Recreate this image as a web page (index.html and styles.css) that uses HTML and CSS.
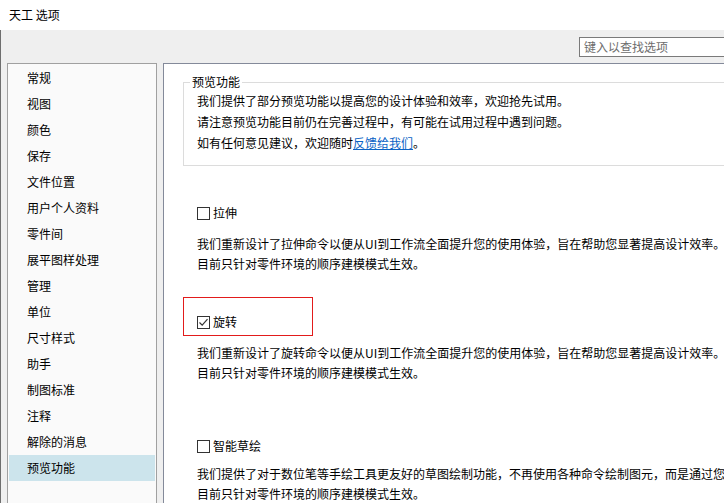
FILE: index.html
```html
<!DOCTYPE html>
<html lang="zh-CN">
<head>
<meta charset="utf-8">
<title>天工 选项</title>
<link rel="stylesheet" href="styles.css">
</head>
<body>
<div class="titlebar">天工 选项</div>
<div class="window">
  <div class="toolbar">
    <div class="search">键入以查找选项</div>
  </div>
  <div class="main">
    <ul class="sidebar">
      <li>常规</li>
      <li>视图</li>
      <li>颜色</li>
      <li>保存</li>
      <li>文件位置</li>
      <li>用户个人资料</li>
      <li>零件间</li>
      <li>展平图样处理</li>
      <li>管理</li>
      <li>单位</li>
      <li>尺寸样式</li>
      <li>助手</li>
      <li>制图标准</li>
      <li>注释</li>
      <li>解除的消息</li>
      <li class="selected">预览功能</li>
    </ul>
    <div class="content">
      <fieldset class="group">
        <legend>预览功能</legend>
        <p>我们提供了部分预览功能以提高您的设计体验和效率，欢迎抢先试用。</p>
        <p>请注意预览功能目前仍在完善过程中，有可能在试用过程中遇到问题。</p>
        <p>如有任何意见建议，欢迎随时<a href="#" class="link">反馈给我们</a>。</p>
      </fieldset>

      <div class="option option-1">
        <div class="option-head">
          <span class="checkbox"></span><span class="label">拉伸</span>
        </div>
        <div class="desc">
          <p>我们重新设计了拉伸命令以便从UI到工作流全面提升您的使用体验，旨在帮助您显著提高设计效率。</p>
          <p>目前只针对零件环境的顺序建模模式生效。</p>
        </div>
      </div>

      <div class="option option-2">
        <div class="option-head highlight">
          <span class="checkbox checked"><svg viewBox="0 0 13 13" width="13" height="13"><path d="M2.5 6.5 L5.2 9.2 L10.5 3.2" fill="none" stroke="#333" stroke-width="1.2"/></svg></span><span class="label">旋转</span>
        </div>
        <div class="desc">
          <p>我们重新设计了旋转命令以便从UI到工作流全面提升您的使用体验，旨在帮助您显著提高设计效率。</p>
          <p>目前只针对零件环境的顺序建模模式生效。</p>
        </div>
      </div>

      <div class="option option-3">
        <div class="option-head">
          <span class="checkbox"></span><span class="label">智能草绘</span>
        </div>
        <div class="desc">
          <p>我们提供了对于数位笔等手绘工具更友好的草图绘制功能，不再使用各种命令绘制图元，而是通过您的笔迹自动识别图元。</p>
          <p>目前只针对零件环境的顺序建模模式生效。</p>
        </div>
      </div>
    </div>
  </div>
</div>
</body>
</html>
```

FILE: styles.css
```css
* { box-sizing: border-box; }
html, body {
  margin: 0;
  padding: 0;
  width: 724px;
  height: 503px;
  overflow: hidden;
  background: #efefef;
  font-family: "Noto Sans CJK SC", "Noto Sans", sans-serif;
  font-size: 12px;
  color: #000;
}
.titlebar {
  height: 30px;
  line-height: 30px;
  padding-left: 9px;
  background: #fff;
  font-size: 12px;
}
.window {
  height: 473px;
  background: #efefef;
  border-left: 1px solid #6e6e6e;
  overflow: hidden;
}
.toolbar {
  height: 33px;
  padding: 7px 0 0 578px;
  display: flex;
}
.search {
  flex: none;
  width: 170px;
  height: 20px;
  border: 1px solid #7a7a7a;
  background: #fff;
  color: #6d6d6d;
  padding-left: 4px;
  line-height: 17px;
  white-space: nowrap;
}
.main {
  display: flex;
  gap: 6px;
  padding-left: 6px;
  height: 480px;
}
.sidebar {
  list-style: none;
  margin: 0;
  padding: 1px 1px 0 1px;
  width: 150px;
  flex: none;
  background: #fafafa;
  border: 1px solid #a0a0a0;
  border-bottom: none;
}
.sidebar li {
  height: 26px;
  line-height: 25px;
  padding-left: 18px;
}
.sidebar li.selected {
  background: #cce4ec;
}
.content {
  flex: 1;
  min-width: 0;
  background: #fff;
  border: 1px solid #848a9a;
  border-bottom: none;
  border-right: none;
  overflow: hidden;
  white-space: nowrap;
}
p { margin: 0; }
.group {
  margin: 10px 0 0 19px;
  width: 620px;
  padding: 0 0 12px 13px;
  border: 1px solid #dcdcdc;
  min-width: 0;
}
.group legend {
  margin-left: -7px;
  padding: 0 2px;
  line-height: 16px;
}
.group p {
  line-height: 21px;
}
.link {
  color: #0b63c5;
  text-decoration: underline;
}
.option {
  margin-left: 19px;
}
.option-head {
  display: flex;
  align-items: center;
  height: 39px;
  padding: 16px 0 5px 13px;
  border: 1px solid transparent;
  width: 130px;
}
.option-head.highlight {
  border-color: #e21b1b;
}
.checkbox {
  flex: none;
  width: 13px;
  height: 13px;
  border: 1px solid #333;
  background: #fff;
  position: relative;
}
.checkbox svg {
  position: absolute;
  left: -1px;
  top: -1px;
}
.label {
  margin-left: 3px;
  line-height: 16px;
}
.desc {
  padding-left: 14px;
}
.desc p {
  line-height: 20px;
}
.option-1 { margin-top: 22px; }
.option-1 .desc { margin-top: 7px; }
.option-2 { margin-top: 23px; }
.option-2 .desc { margin-top: 7px; }
.option-3 { margin-top: 38px; }
.option-3 .desc { margin-top: 4px; }
```
